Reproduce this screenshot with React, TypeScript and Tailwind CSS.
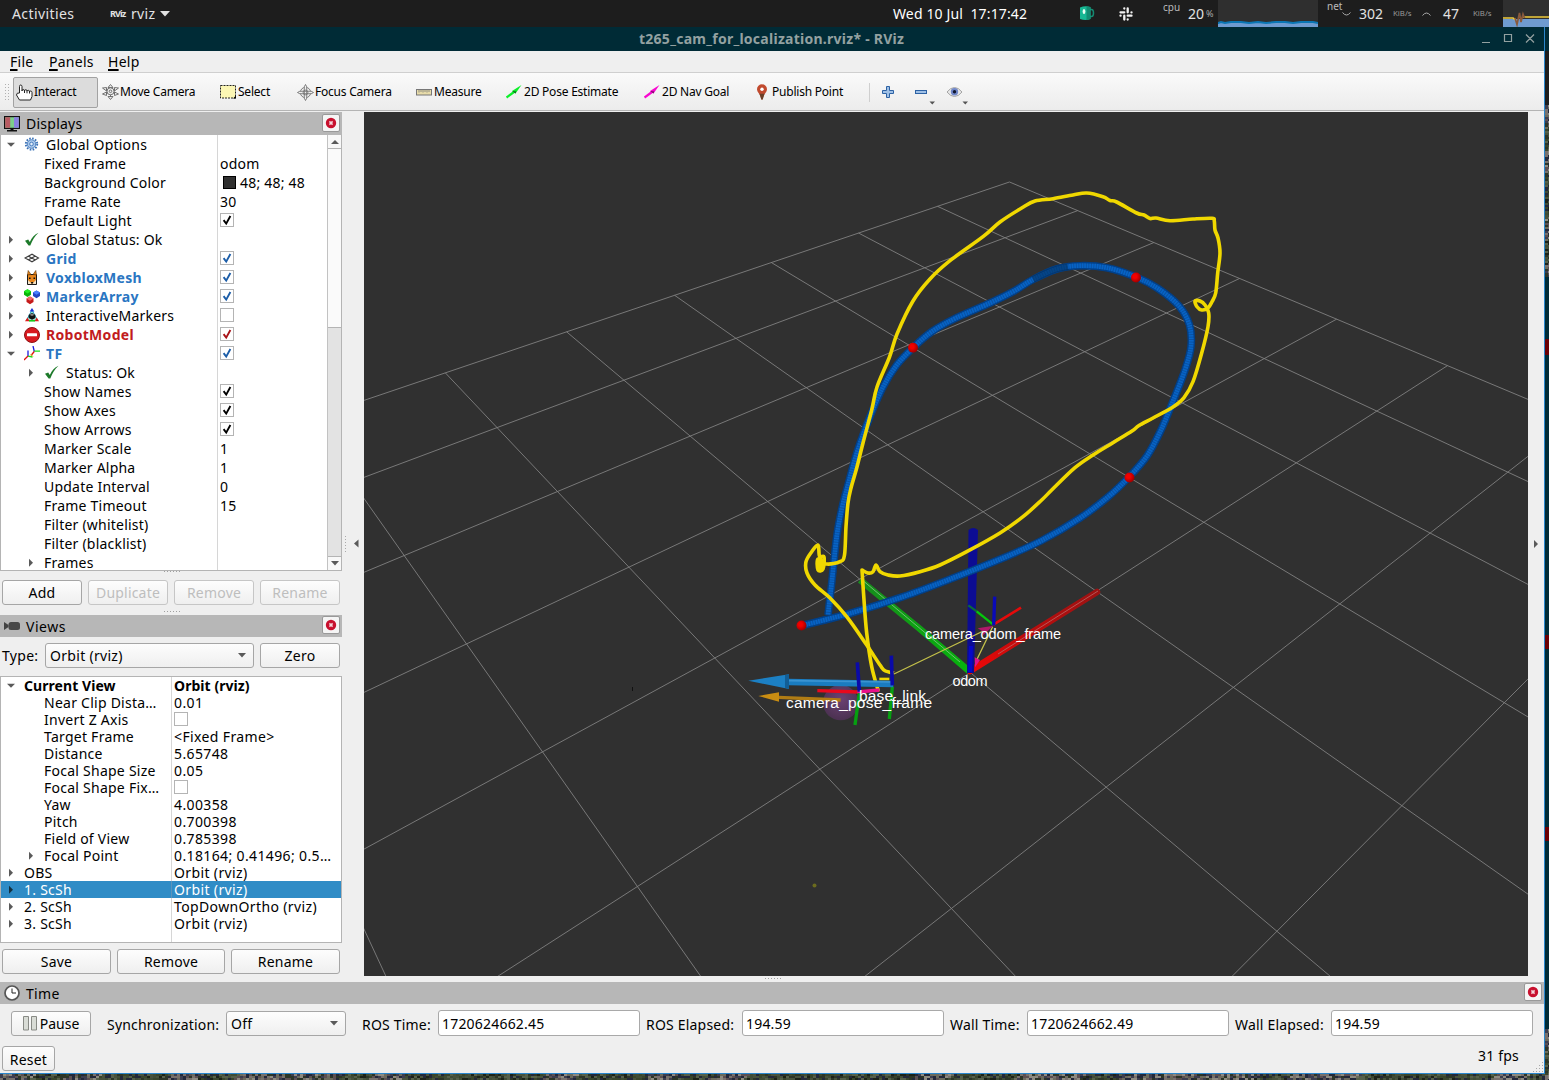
import React from "react";

type Pt = [number, number];

/* ---------- small shared pieces ---------- */

const CloseBtn = ({ small = false }: { small?: boolean }) => (
  <span
    className={
      small
        ? "mb-[2px] flex h-[18px] w-[18px] items-center justify-center rounded-[2px] border border-[#999] bg-[#f5f5f5]"
        : "mb-[2px] flex h-[18px] w-[18px] items-center justify-center rounded-[2px] border border-[#999] bg-[#f5f5f5]"
    }
  >
    <svg width="12" height="12" viewBox="0 0 12 12">
      <circle cx="6" cy="6" r="5.2" fill="#c8102e" />
      <path d="M4.4 4.4l3.2 3.2M7.6 4.4L4.4 7.6" stroke="#f3d5da" strokeWidth="1.5" />
    </svg>
  </span>
);

const Arrow = ({ open, sel }: { open?: boolean; sel?: boolean }) => (
  <svg width="10" height="10" viewBox="0 0 10 10" className="shrink-0">
    <path d={open ? "M1 2.800h8L5 6.800z" : "M3 .800v8l4-4z"} fill={sel ? "#14303f" : "#5a5a5a"} />
  </svg>
);

const Check = ({ color }: { color?: string }) => (
  <svg width="14" height="14" viewBox="0 0 14 14" className="mb-[2px] shrink-0">
    <rect x="0.5" y="0.5" width="13" height="13" fill="#fff" stroke="#b4b4b4" />
    {color && <path d="M3.6 7.2l2.6 3.4 4.2-7.6" fill="none" stroke={color} strokeWidth="1.900" />}
  </svg>
);

const Btn = ({ children, className, disabled }: { children: React.ReactNode; className: string; disabled?: boolean }) => (
  <div
    className={
      "flex items-center justify-center rounded-[3px] border bg-linear-to-b from-[#fdfdfd] to-[#efefef] " +
      (disabled ? "border-[#c6c6c6] text-[#bebebe] " : "border-[#a6a6a6] text-black ") +
      className
    }
  >
    {children}
  </div>
);

const Caret = () => (
  <svg width="8" height="5" viewBox="0 0 8 5">
    <path d="M0 0h8L4 4.4z" fill="#5a5a5a" />
  </svg>
);

const Dots = () => (
  <svg width="18" height="2" viewBox="0 0 18 2" className="ml-[3px]">
    <path d="M0 .500h18" stroke="#a0a0a0" strokeDasharray="1 2" />
  </svg>
);

/* ---------- tree icons ---------- */

const Cube = ({ x, y, a, b }: { x: number; y: number; a: string; b: string }) => (
  <g transform={`translate(${x} ${y})`}>
    <path d="M0 2L3.500 0 7 2v3.500L3.500 7.800 0 5.500z" fill={b} />
    <path d="M0 2L3.500 0 7 2 3.500 4.200z" fill={a} />
  </g>
);

const TreeIcon = ({ name }: { name: string }) => {
  switch (name) {
    case "gear":
      return (
        <svg width="16" height="16" viewBox="0 0 16 16">
          <circle cx="7.500" cy="7" r="5.700" fill="none" stroke="#3a71b5" strokeWidth="1.900" strokeDasharray="1.600 1.380" />
          <circle cx="7.500" cy="7" r="4.300" fill="#a9c7ea" stroke="#4a7fc0" />
          <circle cx="7.500" cy="7" r="1.800" fill="#e8f0fa" stroke="#4a7fc0" />
        </svg>
      );
    case "ok":
      return (
        <svg width="16" height="16" viewBox="0 0 16 16">
          <path d="M1 8.800L4.200 7.500l1.600 2.500C8 5.500 10.500 2.500 14.500.800 10.500 4.500 8.500 8 6.300 13.500H4.600z" fill="#1d7a2a" />
        </svg>
      );
    case "grid":
      return (
        <svg width="16" height="16" viewBox="0 0 16 16">
          <path d="M1 7L8 3.200 14.500 7 8 10.800zM4.500 5.200l6.500 3.600M11 5.200L4.500 8.800" fill="none" stroke="#3c3c3c" strokeWidth="1.100" />
        </svg>
      );
    case "fox":
      return (
        <svg width="16" height="16" viewBox="0 0 16 16">
          <path d="M3.500 4.500h9v10h-9z" fill="#e8861c" stroke="#1a1a1a" />
          <path d="M3.500 5L4.200.500l2.800 4zM12.500 5L11.800.500l-2.800 4z" fill="#e8861c" stroke="#5c3207" strokeWidth=".6" />
          <path d="M4 10l4 4 4-4v4H4z" fill="#f2e3c8" />
          <path d="M5 7.500h1.600v1.500H5zM9.500 7.500h1.600v1.500H9.500zM7.100 12h2v1.600h-2z" fill="#111" />
        </svg>
      );
    case "cubes":
      return (
        <svg width="17" height="16" viewBox="0 0 17 16">
          <Cube x={0} y={0.300} a="#22f022" b="#0ab40a" />
          <Cube x={9} y={1.500} a="#4a80ff" b="#2347c4" />
          <Cube x={2.500} y={7.500} a="#f06a6a" b="#c51a1a" />
        </svg>
      );
    case "im":
      return (
        <svg width="16" height="16" viewBox="0 0 16 16">
          <path d="M8 2L2.300 12.500h11.400z" fill="#9fe6d8" stroke="#20a0c0" />
          <path d="M8 0l2.300 3.500H5.700z" fill="#1530d8" />
          <path d="M1 13.300L3.500 9.500l2 3.800z" fill="#e01818" />
          <path d="M15 13.300L12.700 9.500l-2 3.800z" fill="#e01818" />
          <path d="M5 12.800h6" stroke="#18c818" strokeWidth="1.600" />
          <path d="M4.700 6.700L8 5l3.300 1.700V10L8 11.700 4.700 10z" fill="#111" />
          <path d="M5.300 6.800L8 5.700l2.700 1.100L8 8.100z" fill="#888" />
        </svg>
      );
    case "stop":
      return (
        <svg width="16" height="16" viewBox="0 0 16 16">
          <circle cx="8" cy="8" r="7.500" fill="#d81a1f" stroke="#8e1114" />
          <rect x="3" y="6.300" width="10" height="3" rx=".5" fill="#fff" />
        </svg>
      );
    default:
      return (
        <svg width="16" height="16" viewBox="0 0 16 16">
          <path d="M10.300 5.500L9 0M4 10V4.500" stroke="#1a1ae0" strokeWidth="1.300" />
          <path d="M10.300 5.200H16M4 10.200L8.500 11" stroke="#18e018" strokeWidth="1.300" />
          <path d="M10.300 5.500L7 9.500M4 10l-4 4" stroke="#e01010" strokeWidth="1.300" />
          <path d="M6.500 8L9 10.500" stroke="#d8d020" strokeWidth="1" />
        </svg>
      );
  }
};

/* ---------- displays tree ---------- */

type DRow = {
  t: string;
  open?: boolean;
  arrow?: number;
  icon?: string;
  color?: string;
  val?: string;
  check?: string;
  swatch?: boolean;
};
const blue = "text-[#2a76c2]";
const K = "#000";
const B = "#1c5da8";
const displays: DRow[] = [
  { t: "Global Options", arrow: 0, open: true, icon: "gear" },
  { t: "Fixed Frame", val: "odom" },
  { t: "Background Color", val: "48; 48; 48", swatch: true },
  { t: "Frame Rate", val: "30" },
  { t: "Default Light", check: K },
  { t: "Global Status: Ok", arrow: 0, icon: "ok" },
  { t: "Grid", arrow: 0, icon: "grid", color: blue, check: B },
  { t: "VoxbloxMesh", arrow: 0, icon: "fox", color: blue, check: B },
  { t: "MarkerArray", arrow: 0, icon: "cubes", color: blue, check: B },
  { t: "InteractiveMarkers", arrow: 0, icon: "im", check: "" },
  { t: "RobotModel", arrow: 0, icon: "stop", color: "text-[#c11b20]", check: "#a81318" },
  { t: "TF", arrow: 0, open: true, icon: "tf", color: blue, check: B },
  { t: "Status: Ok", arrow: 1, icon: "ok" },
  { t: "Show Names", check: K },
  { t: "Show Axes", check: K },
  { t: "Show Arrows", check: K },
  { t: "Marker Scale", val: "1" },
  { t: "Marker Alpha", val: "1" },
  { t: "Update Interval", val: "0" },
  { t: "Frame Timeout", val: "15" },
  { t: "Filter (whitelist)" },
  { t: "Filter (blacklist)" },
  { t: "Frames", arrow: 1 },
];

const DisplayRow = ({ r }: { r: DRow }) => (
  <div className="flex h-[19px] shrink-0 items-center leading-[19px] tracking-[0.220px]">
    <div className="flex h-full w-[216px] shrink-0 items-center">
      <span className={"flex shrink-0 items-center " + (r.arrow === 1 ? (r.icon ? "w-[43px] pl-[25px]" : "w-[43px] pl-[25px]") : r.icon ? "w-[23px] pl-[5px]" : "w-[43px]")}>
        {r.arrow !== undefined && <Arrow open={r.open} />}
      </span>
      {r.icon && (
        <span className="w-[22px] shrink-0">
          <TreeIcon name={r.icon} />
        </span>
      )}
      <span className={"whitespace-nowrap " + (r.color ? "font-bold tracking-[0.300px] " + r.color : "")}>{r.t}</span>
    </div>
    <div className="flex h-full grow items-center border-l border-[#d6d6d6] pl-[2px]">
      {r.check !== undefined && <Check color={r.check} />}
      {r.swatch && <span className="mr-1 ml-[3px] h-[13px] w-[13px] border border-black bg-[#303030]" />}
      {r.val}
    </div>
  </div>
);

/* ---------- views tree ---------- */

type VRow = { t: string; arrow?: number; open?: boolean; val?: string; box?: boolean; bold?: boolean; sel?: boolean; top?: boolean };
const views: VRow[] = [
  { t: "Current View", arrow: 0, open: true, val: "Orbit (rviz)", bold: true, top: true },
  { t: "Near Clip Dista…", val: "0.01" },
  { t: "Invert Z Axis", box: true },
  { t: "Target Frame", val: "<Fixed Frame>" },
  { t: "Distance", val: "5.65748" },
  { t: "Focal Shape Size", val: "0.05" },
  { t: "Focal Shape Fix…", box: true },
  { t: "Yaw", val: "4.00358" },
  { t: "Pitch", val: "0.700398" },
  { t: "Field of View", val: "0.785398" },
  { t: "Focal Point", arrow: 1, val: "0.18164; 0.41496; 0.5…" },
  { t: "OBS", arrow: 0, val: "Orbit (rviz)", top: true },
  { t: "1. ScSh", arrow: 0, val: "Orbit (rviz)", top: true, sel: true },
  { t: "2. ScSh", arrow: 0, val: "TopDownOrtho (rviz)", top: true },
  { t: "3. ScSh", arrow: 0, val: "Orbit (rviz)", top: true },
];

const ViewRow = ({ r }: { r: VRow }) => (
  <div
    className={
      "flex h-[17px] shrink-0 items-center leading-[17px] " +
      (r.sel ? "bg-[#308cc6] text-white " : "") +
      (r.bold ? "font-bold tracking-[0.060px]" : "tracking-[0.250px]")
    }
  >
    <div className="flex w-[170px] shrink-0 items-center">
      <span className={"flex shrink-0 items-center " + (r.top ? "w-[23px] pl-[5px]" : "w-[43px] pl-[25px]")}>
        {r.arrow !== undefined && <Arrow open={r.open} sel={r.sel} />}
      </span>
      <span className="whitespace-nowrap">{r.t}</span>
    </div>
    <div
      className={
        "flex h-full grow items-center border-l pl-[2px] whitespace-nowrap " +
        (r.bold ? "" : "tracking-[0.370px] ") +
        (r.sel ? "border-[#5b93bb]" : "border-[#d6d6d6]")
      }
    >
      {r.box && <Check />}
      {r.val}
    </div>
  </div>
);

/* ---------- 3D scene ---------- */

const smooth = (p: Pt[]) => {
  let d = `M${p[0][0]} ${p[0][1]}`;
  for (let i = 0; i < p.length - 1; i++) {
    const a = p[i - 1] ?? p[i];
    const b = p[i];
    const c = p[i + 1];
    const e = p[i + 2] ?? c;
    d += `C${b[0] + (c[0] - a[0]) / 6} ${b[1] + (c[1] - a[1]) / 6} ${c[0] - (e[0] - b[0]) / 6} ${c[1] - (e[1] - b[1]) / 6} ${c[0]} ${c[1]}`;
  }
  return d;
};

/* Orbit camera: ground-plane point to viewport pixel. */
const project = (x: number, y: number): Pt => {
  const right = 0.1322 + 0.7592 * x - 0.6509 * y;
  const up = -0.6998 + 0.4194 * x + 0.4892 * y;
  const depth = 5.681 + 0.4978 * x + 0.5806 * y;
  return [946 + (1043 * right) / depth, 544 - (1043 * up) / depth];
};

const gridLines: string[] = [];
for (let i = -5; i <= 5; i++) {
  const [a, b] = [project(i, -5), project(i, 5)];
  const [c, e] = [project(-5, i), project(5, i)];
  gridLines.push(`M${a[0]} ${a[1]}L${b[0]} ${b[1]}`, `M${c[0]} ${c[1]}L${e[0]} ${e[1]}`);
}

const path: Pt[] = [
  [828, 615], [831.7, 583], [836.7, 536.7], [842, 508], [848.5, 483], [857.500, 451], [870, 416.7], [883, 387], [896.7, 365],
  [913, 347.7], [932, 331.5], [956.7, 317.7], [990, 303], [1013, 291.7], [1033, 279.500], [1056.7, 269], [1080, 265.7], [1106.7, 267.7],
  [1136, 277], [1158, 288.500], [1179, 306], [1189.500, 325], [1191, 346.7], [1185, 370], [1173.500, 400], [1161, 430], [1147, 456],
  [1129, 477], [1108, 497], [1080, 518], [1041.7, 540.500], [1003, 558], [953, 578], [903, 596.7], [853, 612.500], [801.7, 625.7],
];
const dark: Pt[] = [[1033, 279.500], [1044, 274], [1056.7, 269], [1068, 267]];

const odomA: Pt[] = [
  [894, 673], [885, 670.7], [880, 665], [866.7, 645], [846.7, 616.7], [830, 598], [815, 585], [807, 573], [806, 561.7],
  [811.7, 551.700], [818, 545], [819.5, 556], [824, 557], [823, 569], [818, 570], [818, 559], [826.7, 564], [840, 561.7], [844.500, 555], [846, 526.7], [848, 503],
  [851, 488], [856.7, 468], [863, 443], [871.7, 410], [877, 387], [889.500, 357], [897, 334], [913, 301], [930, 279],
  [950, 260.7], [983, 236.7], [1000, 222], [1021.7, 208], [1035, 201], [1053, 198.7], [1073, 195], [1086.7, 193], [1103, 196.7],
  [1110, 200.500], [1116.7, 202], [1136.7, 213], [1144, 215], [1150, 218.500], [1156, 218], [1170, 220.7], [1193, 219], [1212, 218.3], [1214.3, 221], [1215, 230], [1218, 238],
  [1220, 253], [1217.7, 273], [1215.7, 293], [1212, 301.7], [1208, 308], [1201.7, 310], [1197, 306.7], [1195, 301], [1200, 301],
  [1205, 305], [1208.7, 313], [1208, 326.7], [1201.7, 353], [1193, 381.7], [1184, 397.7], [1173, 407], [1153, 418], [1139, 425.500],
  [1132, 431], [1113, 442.7], [1093, 455], [1075, 467.7], [1051.7, 490], [1041.7, 500], [1023, 516.7], [1000, 533], [966.7, 551.7],
  [940, 565], [920, 571.7], [900, 576], [888, 575], [880, 571.7], [876, 565], [873, 571.7], [868, 573], [862, 570],
];
const odomB: Pt[] = [[862, 570], [864, 600], [866.7, 633], [871.7, 666.7], [878, 690]];

const Scene = () => (
  <svg width="1164" height="864" viewBox="364 112 1164 864" className="block bg-[#303030]">
    <defs>
      <linearGradient id="red" x1="0" y1="1" x2="1" y2="0">
        <stop offset="0" stopColor="#ee0808" />
        <stop offset="0.5" stopColor="#b80d0d" />
        <stop offset="1" stopColor="#9c1212" />
      </linearGradient>
      <linearGradient id="green" x1="0" y1="0" x2="1" y2="1">
        <stop offset="0" stopColor="#178c1c" />
        <stop offset="1" stopColor="#06b40c" />
      </linearGradient>
      <radialGradient id="ball" cx="40%" cy="40%" r="60%">
        <stop offset="0.3" stopColor="#f20000" />
        <stop offset="1" stopColor="#a00000" />
      </radialGradient>
      <radialGradient id="purple" cx="50%" cy="40%" r="60%">
        <stop offset="0" stopColor="#6b4273" />
        <stop offset="1" stopColor="#4b3151" />
      </radialGradient>
    </defs>
    <path d={gridLines.join("")} stroke="#808080" strokeWidth="0.9" fill="none" />
    <circle cx="814.500" cy="885.500" r="2" fill="#6b6b1e" />
    <path d="M632.500 687v4" stroke="#111" />

    <path d="M1097 592L970 671" stroke="url(#red)" strokeWidth="6.500" strokeLinecap="round" />
    <path d="M1098 591L998 654" stroke="#b86a6a" strokeWidth="0.800" />
    <path d="M860 580L920 629L969 671" fill="none" stroke="url(#green)" strokeWidth="6.500" />
    <path d="M861 579L960 662" stroke="#7cc07e" strokeWidth="0.900" />
    <path d="M968.500 530q4.700-4 9.500 0l-4 143h-7z" fill="#0c0c93" />
    <path d="M971 646l-1 26" stroke="#0808c8" strokeWidth="4" />

    <path d={smooth(path)} fill="none" stroke="#01408a" strokeWidth="7.600" />
    <path d={smooth(path)} fill="none" stroke="#0763c6" strokeWidth="4.800" />
    <path d={smooth(path)} fill="none" stroke="#0a4080" strokeWidth="7.500" strokeDasharray="0.900 1.600" opacity="0.500" />
    <path d={smooth(dark)} fill="none" stroke="#04315f" strokeWidth="6.500" opacity="0.600" />
    {[[801.500, 625.500], [913, 347.700], [1136, 277.500], [1129.500, 477.500]].map(([x, y]) => (
      <circle key={x} cx={x} cy={y} r="5" fill="url(#ball)" />
    ))}

    <g transform="translate(720 500) scale(0.33333)">
      <circle cx="362" cy="608" r="53" fill="url(#purple)" />
      <path d="M522 522L790 393M818 380L770 480" stroke="#c3c04a" strokeWidth="4" />
      <path d="M773 385l47-8-34 32 4-14z" fill="#b0186a" />
      <path d="M764 472l16 8-15 22z" fill="#e0128a" />
      <path d="M745 316L770 334" stroke="#0c6a3a" strokeWidth="7" />
      <path d="M770 334L820 374" stroke="#05c80c" strokeWidth="7" />
      <path d="M820 374L903 323" stroke="#e60a0a" strokeWidth="8" />
      <path d="M824 290L821 376" stroke="#0a0ab8" strokeWidth="10" />
    </g>

    <path d={smooth(odomA)} fill="none" stroke="#f0d800" strokeWidth="3.600" strokeLinejoin="round" />
    <path d={smooth(odomB)} fill="none" stroke="#f0d800" strokeWidth="3.600" strokeLinecap="round" />
    <ellipse cx="820.500" cy="564" rx="4" ry="6.500" fill="#f0d800" />

    <g transform="translate(720 500) scale(0.33333)">
      <path d="M478 537h30" stroke="#f0d800" strokeWidth="8" />
      <path d="M292 572L415 576" stroke="#e8081c" strokeWidth="10" />
      <path d="M412 576L478 570" stroke="#e8108a" strokeWidth="10" />
      <path d="M418 580L405 675" stroke="#06a010" strokeWidth="10" />
      <path d="M517 560L508 657" stroke="#06a010" strokeWidth="10" />
      <path d="M205 546L520 552" stroke="#1a7cc0" strokeWidth="20" />
      <path d="M205 542L515 546" stroke="#3a94d2" strokeWidth="5" />
      <path d="M85 542L207 523V567z" fill="#1c80c4" />
      <path d="M195 525l12-2v44l-12-4z" fill="#125e96" />
      <path d="M175 592L362 600" stroke="#b07c14" strokeWidth="10" />
      <path d="M115 588L177 577V605z" fill="#c98d12" />
      <path d="M412 487L418 575" stroke="#0a0aa8" strokeWidth="11" />
      <path d="M514 467L517 556" stroke="#0a0aa8" strokeWidth="11" />
    </g>

    <g fill="#fff" className="font-['Liberation_Sans',sans-serif]">
      <text x="925" y="639" fontSize="14.500" textLength="136">camera_odom_frame</text>
      <text x="952.500" y="686" fontSize="14.500" textLength="35">odom</text>
      <text x="859" y="701" fontSize="15.500" textLength="67">base_link</text>
      <text x="786" y="707.500" fontSize="15.500" textLength="146">camera_pose_frame</text>
    </g>
  </svg>
);

/* ---------- aerial photo behind the windows ---------- */

const greens = ["#2c3527", "#47523c", "#55604a", "#23283a", "#38452b", "#1c2218", "#3f4c36"];
const roofs = ["#6b6a5c", "#8d8a80", "#5b4f52", "#3c3d4f", "#23283a", "#77706c", "#2c3527"];
const hash = (n: number) => {
  let v = Math.imul(n ^ (n >>> 15), 2246822519);
  v = Math.imul(v ^ (v >>> 13), 3266489917);
  return (v ^ (v >>> 16)) >>> 0;
};
const Aerial = ({ w, h }: { w: number; h: number }) => {
  const cells: React.ReactNode[] = [];
  for (let y = 0; y < h; y += 2)
    for (let x = 0; x < w; x += 3) {
      const block = hash(Math.floor((x + y * 1.5) / 34) + 91) % 5 < 2 ? roofs : greens;
      cells.push(<rect key={`${x}-${y}`} x={x} y={y} width="3" height="2" fill={block[hash(x * 977 + y * 131 + 5) % 7]} />);
    }
  return (
    <svg width={w} height={h} className="block shrink-0">
      {cells}
    </svg>
  );
};

/* ---------- toolbar ---------- */

const Tool = ({ w, icon, label }: { w: string; icon: React.ReactNode; label: string }) => (
  <div className={"flex shrink-0 items-center gap-[2px] whitespace-nowrap " + w}>
    <span className="flex w-4 shrink-0 justify-center">{icon}</span>
    {label}
  </div>
);

const PoseArrow = ({ c, d }: { c: string; d: string }) => (
  <svg width="16" height="16" viewBox="0 0 16 16">
    <path d="M.5 13.500L8 8" stroke={c} strokeWidth="2.200" />
    <path d="M6 7L15.500 1 9.500 9.500z" fill={c} />
    <path d="M6 7l3.500 2.500.8-2z" fill={d} />
  </svg>
);

const Crosshair = () => (
  <svg width="17" height="17" viewBox="0 0 18 18" className="shrink-0">
    <g fill="#eee" stroke="#777" strokeWidth="1">
      <circle cx="9" cy="9" r="5.500" />
      <path d="M9 .5l1.300 2.500v12L9 17.500 7.700 15V3zM.5 9L3 7.700h12L17.500 9 15 10.300H3z" />
      <circle cx="9" cy="9" r="2.500" fill="none" />
    </g>
  </svg>
);

const MoveIcon = () => (
  <svg width="17" height="16" viewBox="0 0 17 16" className="shrink-0">
    <g fill="#eee" stroke="#666" strokeWidth="0.900">
      <path d="M8.500.5l2.500 3H6zM8.500 15.500l2.500-3H6zM.5 4l4-.5v3.500zM16.500 4l-4-.5v3.500zM.5 10l4 1.500V8zM16.500 10l-4 1.500V8z" />
      <path d="M4 5l9 4.500M13 5L4 9.500M8.500 3v10" />
      <circle cx="8.500" cy="7.300" r="3.500" />
      <circle cx="8.500" cy="7.300" r="1.300" />
    </g>
  </svg>
);

const Field = ({ label, lw, value }: { label: string; lw: string; value: string }) => (
  <>
    <span className={"shrink-0 whitespace-nowrap pt-[2px] " + lw}>{label}</span>
    <div className="mr-[6px] flex h-[26px] w-[202px] shrink-0 items-center rounded-[3px] border border-[#a9a9a9] bg-white pl-[3px]">{value}</div>
  </>
);

const cpuTop = "M0 24V23l3-1 4 1 6-1h10l8 1 9-1 8 1 10-1h9l8 1 8-1h12l5 1";

export default function App() {
  return (
    <div className="flex h-[1080px] w-[1549px] flex-col overflow-hidden bg-[#efefef] font-['Noto_Sans',sans-serif] text-[14px] text-black">
      {/* desktop top bar */}
      <div className="flex h-[27px] shrink-0 items-center bg-[#1d1d1d] text-[#e2e2e2]">
        <span className="w-[97px] pl-3 tracking-[0.400px]">Activities</span>
        <span className="w-[34px] pl-[13px] text-[9px] leading-none font-bold tracking-[-0.9px]">RViz</span>
        <span className="w-[29px] tracking-[0.300px]">rviz</span>
        <svg width="10" height="6" viewBox="0 0 10 6">
          <path d="M0 0h10L5 5.500z" fill="#e2e2e2" />
        </svg>
        <span className="ml-[723px] w-[186px] tracking-[0.130px] whitespace-pre text-white">Wed 10 Jul  17:17:42</span>
        <svg width="16" height="15" viewBox="0 0 16 15">
          <path d="M10 3.500h2.500q2 0 2 3.500t-2 3.500H10" fill="none" stroke="#158a72" strokeWidth="1.500" />
          <path d="M1 1.500q5-2 10.500-.5V13q-5 2-10.500 0z" fill="#17b894" />
          <path d="M7.500.5q2 0 4 .7V13l-4 1z" fill="#128c72" />
          <ellipse cx="5" cy="5.500" rx="1.400" ry="2.500" fill="#eafff4" />
        </svg>
        <svg width="14" height="14" viewBox="0 0 14 14" className="ml-[24px]">
          <g stroke="#f2f2f2" strokeWidth="2.300" strokeLinecap="round">
            <path d="M5.300 5.300H1.500M5.300 1.500v.100M8.700 5.300V1.500M12.500 5.300v.100M8.700 8.700h3.800M8.700 12.500v-.100M5.300 8.700v3.800M1.500 8.700h.100" />
          </g>
        </svg>
        <span className="mb-[14px] ml-[30px] w-[25px] text-[10px] leading-none text-[#bbb]">cpu</span>
        <span className="text-[14px]">20</span>
        <span className="ml-[2px] w-[12px] text-[9px] text-[#aaa]">%</span>
        <svg width="100" height="27" className="ml-auto shrink-0 bg-[#2f2f2f]">
          <path d={cpuTop + "V27H0z"} fill="#6f9bd0" />
          <path d={cpuTop} fill="none" stroke="#0a76b4" strokeWidth="2" />
        </svg>
        <div className="flex h-full w-[185px] shrink-0 items-center">
          <span className="mb-[15px] ml-[9px] w-[15px] text-[10px] leading-none text-[#bbb]">net</span>
          <svg width="9" height="4" viewBox="0 0 9 4">
            <path d="M.5.5q2 2.500 4 2.500t4-2.500" fill="none" stroke="#aaa" />
          </svg>
          <span className="ml-[8px] w-[34px]">302</span>
          <span className="w-[29px] text-[7.800px] text-[#999]">KiB/s</span>
          <svg width="9" height="4" viewBox="0 0 9 4">
            <path d="M.5 3.500q2-2.500 4-2.500t4 2.500" fill="none" stroke="#aaa" />
          </svg>
          <span className="ml-[12px] w-[30px]">47</span>
          <span className="text-[7.800px] text-[#999]">KiB/s</span>
        </div>
        <svg width="46" height="27" className="shrink-0 bg-[#2f2f2f]">
          <path d="M0 19h46v8H0z" fill="#6f9bd0" />
          <path d="M0 18h10l3 2M20 17h26" fill="none" stroke="#f0cc3c" strokeWidth="1.600" />
          <path d="M12 18l2 6.500L16.500 13l1.500 9 2-8 1.500 4" fill="none" stroke="#8a5a3c" strokeWidth="1.700" />
        </svg>
      </div>

      <div className="flex h-[1053px] shrink-0">
        <div className="flex w-[1545px] shrink-0 flex-col">
          <div className="flex h-[1047px] shrink-0 flex-col border-r border-b border-[#2a86cc]">
            {/* title bar */}
            <div className="flex h-6 shrink-0 items-center bg-[#002b36] pb-[2px] text-[14px] font-bold text-[#93a1a1]">
              <span className="ml-[639px] w-[843px] tracking-[0.260px] whitespace-nowrap">t265_cam_for_localization.rviz* - RViz</span>
              <svg width="54" height="10" viewBox="0 0 54 10" fill="none" stroke="#93a1a1">
                <path d="M0 9.500h8M22.500 1.500h7v7h-7zM44 1.500l8 8M52 1.500l-8 8" strokeWidth="1.200" />
              </svg>
            </div>
            {/* menu */}
            <div className="flex h-[22px] shrink-0 items-center border-b border-[#cfcfcf] pl-[10px] tracking-[0.250px]">
              {["File", "Panels", "Help"].map((m, i) => (
                <span key={m} className={i === 0 ? "w-[39px]" : "w-[59px]"}>
                  <span className="underline decoration-[1.500px] underline-offset-[2px]">{m[0]}</span>
                  {m.slice(1)}
                </span>
              ))}
            </div>
            {/* toolbar */}
            <div className="flex h-[38px] shrink-0 items-center border-b border-[#b4b4b4] bg-linear-to-b from-[#fafafa] to-[#ececec] pt-px text-[12px] tracking-[-0.220px]">
              <svg width="13" height="18" viewBox="0 0 13 18">
                <path d="M5.500 1v16M8.500 1v16" stroke="#b0b0b0" strokeDasharray="1 2" />
              </svg>
              <div className="mr-[4px] flex h-[31px] w-[85px] shrink-0 items-center rounded-[2px] border border-[#a2a2a2] bg-[#dcdcdc] pl-[2px]">
                <svg width="17" height="17" viewBox="0 0 17 17" className="mr-px shrink-0">
                  <path
                    d="M3.500 9V2.500q0-1.500 1.200-1.500T6 2.500V7q0-1.500 1.200-1.500T8.500 7q0-1.300 1.300-1.300T11 7.300q0-1 1.300-1T13.500 8q0-1 1.200-1T16 8.500v4l-1.500 3.500H3.500L.5 11q0-2.500 3-2z"
                    fill="#fff"
                    stroke="#222"
                  />
                  <path d="M8.500 7v2M11 7.300v2M13.500 8v1.500" stroke="#222" />
                </svg>
                Interact
              </div>
              <Tool w="w-[118px]" icon={<MoveIcon />} label="Move Camera" />
              <Tool
                w="w-[77px]"
                label="Select"
                icon={
                  <svg width="16" height="14" viewBox="0 0 16 14">
                    <rect x="0.500" y="0.500" width="15" height="12.500" fill="#fbf6b4" stroke="#222" strokeDasharray="2 1" />
                    <path d="M13 13.500h3v-3z" fill="#000" />
                  </svg>
                }
              />
              <Tool w="w-[119px]" icon={<Crosshair />} label="Focus Camera" />
              <Tool
                w="w-[90px]"
                label="Measure"
                icon={
                  <svg width="16" height="7" viewBox="0 0 16 7">
                    <rect x="0.500" y="0.500" width="15" height="5.500" fill="#e8dcaa" stroke="#777" />
                    <path d="M3 1v2.500M5 1v2M7 1v2.500M9 1v2M11 1v2.500M13 1v2" stroke="#777" strokeWidth=".8" />
                  </svg>
                }
              />
              <Tool w="w-[138px]" icon={<PoseArrow c="#0cf02a" d="#0a6a18" />} label="2D Pose Estimate" />
              <Tool w="w-[110px]" icon={<PoseArrow c="#f808d0" d="#7a0a68" />} label="2D Nav Goal" />
              <Tool
                w="w-[115px]"
                label="Publish Point"
                icon={
                  <svg width="12" height="16" viewBox="0 0 12 16">
                    <path d="M6 .3a5 5 0 0 1 5 5c0 3-3.800 5.200-4.300 10.200H5.300C4.800 10.500 1 8.300 1 5.300a5 5 0 0 1 5-5z" fill="#c14a2e" />
                    <path d="M3.500 9.800h5L6.700 15.500H5.300z" fill="#6a4028" />
                    <circle cx="6" cy="5.200" r="1.700" fill="#fff" />
                  </svg>
                }
              />
              <span className="h-[19px] w-px bg-[#cfcfcf]" />
              <svg width="100" height="25" viewBox="0 0 100 25" className="ml-[9px]">
                <path d="M7.500 6.500h3v4h4v3h-4v4h-3v-4h-4v-3h4z" fill="#9fc0e6" stroke="#2d62a4" />
                <rect x="36.500" y="10.500" width="11" height="3" fill="#9fc0e6" stroke="#2d62a4" />
                <path d="M50.500 21.500h5.500l-2.700 3zM83.500 21.500h5.500l-2.700 3z" fill="#555" />
                <path d="M68 12q3.500-4.500 7.500-4.500T83 12q-3.500 4.500-7.500 4.500T68 12z" fill="#e8e8e8" stroke="#a4a4a4" />
                <circle cx="75.500" cy="11.700" r="3.700" fill="#6f86c8" />
                <circle cx="75.500" cy="11.700" r="1.700" fill="#10152c" />
              </svg>
            </div>

            {/* middle */}
            <div className="mt-px flex h-[864px] shrink-0">
              <div className="flex w-[342px] shrink-0 flex-col">
                <div className="flex h-[23px] shrink-0 items-center bg-[#b7b7b7] pr-[2px] pl-1">
                  <svg width="16" height="16" viewBox="0 0 16 16">
                    <rect x=".6" y=".6" width="14.800" height="11.800" fill="#7ccf8a" stroke="#111" strokeWidth="1.200" />
                    <path d="M1.200 1.200h5v10.600h-5z" fill="#b95a62" />
                    <path d="M10 1.200h4.800v10.600H10z" fill="#8a80e0" />
                    <path d="M6.500 13h3v1H13v1.500H3V14h3.500z" fill="#111" />
                  </svg>
                  <span className="ml-[6px] grow tracking-[0.250px]">Displays</span>
                  <CloseBtn />
                </div>
                <div className="flex h-[436px] shrink-0 border-x border-b border-[#b4b4b4] bg-white">
                  <div className="flex h-full grow flex-col overflow-hidden">
                    {displays.map((r) => (
                      <DisplayRow key={r.t} r={r} />
                    ))}
                  </div>
                  <div className="flex w-[14px] shrink-0 flex-col border-l border-[#c2c2c2] bg-[#e3e3e3]">
                    <div className="flex h-[14px] items-center justify-center border-b border-[#b4b4b4] bg-[#f8f8f8]">
                      <svg width="8" height="4" viewBox="0 0 8 4">
                        <path d="M0 4h8L4 0z" fill="#5a5a5a" />
                      </svg>
                    </div>
                    <div className="h-[179px] border-b border-[#b4b4b4] bg-[#fafafa]" />
                    <div className="mt-auto flex h-[14px] items-center justify-center border-t border-[#b4b4b4] bg-[#f8f8f8]">
                      <Caret />
                    </div>
                  </div>
                </div>
                <div className="flex h-[9px] shrink-0 justify-center">
                  <Dots />
                </div>
                <div className="flex shrink-0 gap-[6px] pl-[2px] tracking-[0.200px]">
                  <Btn className="h-[25px] w-[80px]">Add</Btn>
                  <Btn className="h-[25px] w-[80px]" disabled>Duplicate</Btn>
                  <Btn className="h-[25px] w-[80px]" disabled>Remove</Btn>
                  <Btn className="h-[25px] w-[80px]" disabled>Rename</Btn>
                </div>
                <div className="flex h-[10px] shrink-0 items-center justify-center pt-[3px]">
                  <Dots />
                </div>
                <div className="flex h-[22px] shrink-0 items-center bg-[#b7b7b7] pr-[2px] pl-1">
                  <svg width="16" height="10" viewBox="0 0 16 10">
                    <path d="M0 1l4.500 3v2L0 9z" fill="#444" />
                    <rect x="4.500" y="1" width="11.500" height="8" rx="2.500" fill="#484848" />
                  </svg>
                  <span className="ml-[6px] grow tracking-[0.500px]">Views</span>
                  <CloseBtn />
                </div>
                <div className="mt-[6px] flex shrink-0 items-center pl-[2px] tracking-[0.300px]">
                  <span className="w-[43px]">Type:</span>
                  <div className="mr-[6px] flex h-[25px] w-[209px] items-center justify-between rounded-[3px] border border-[#a6a6a6] bg-linear-to-b from-[#fdfdfd] to-[#efefef] pr-[7px] pl-1">
                    Orbit (rviz) <Caret />
                  </div>
                  <Btn className="h-[25px] w-[80px]">Zero</Btn>
                </div>
                <div className="mt-[8px] flex h-[267px] shrink-0 flex-col border border-[#b4b4b4] bg-white">
                  {views.map((r) => (
                    <ViewRow key={r.t} r={r} />
                  ))}
                  <div className="flex grow pl-[170px]">
                    <span className="border-l border-[#d6d6d6]" />
                  </div>
                </div>
                <div className="mt-[6px] flex shrink-0 gap-[6px] pl-[2px] tracking-[0.200px]">
                  <Btn className="h-[25px] w-[109px]">Save</Btn>
                  <Btn className="h-[25px] w-[108px]">Remove</Btn>
                  <Btn className="h-[25px] w-[109px]">Rename</Btn>
                </div>
              </div>
              <div className="flex w-[22px] shrink-0 items-center">
                <svg width="22" height="18" viewBox="0 0 22 18">
                  <path d="M3.500 1v16" stroke="#aaa" strokeDasharray="1 2" />
                  <path d="M16.500 4.500v8l-4.500-4z" fill="#5a5a5a" />
                </svg>
              </div>
              <Scene />
              <div className="flex w-4 shrink-0 items-center pl-[5px]">
                <svg width="6" height="10" viewBox="0 0 6 10">
                  <path d="M1 1v8l4-4z" fill="#5a5a5a" />
                </svg>
              </div>
            </div>

            {/* time dock */}
            <div className="flex h-[6px] shrink-0 justify-center pt-[2px]">
              <Dots />
            </div>
            <div className="flex h-[22px] shrink-0 items-center bg-[#b7b7b7] pr-[2px] pl-1">
              <svg width="16" height="16" viewBox="0 0 16 16">
                <circle cx="8" cy="8" r="7" fill="#fff" stroke="#555" strokeWidth="1.700" />
                <path d="M8 3.500V8h4" fill="none" stroke="#222" />
              </svg>
              <span className="ml-[6px] grow tracking-[0.300px]">Time</span>
              <CloseBtn small />
            </div>
            <div className="mt-[6px] flex h-[26px] shrink-0 items-center pl-[11px] tracking-[0.200px]">
              <Btn className="mr-4 h-[25px] w-[80px] gap-[2px] tracking-normal">
                <svg width="15" height="15" viewBox="0 0 15 15">
                  <path d="M.5.5h5v13.500h-5zM8.500.5h5v13.500h-5z" fill="#d9dcd6" stroke="#888a85" />
                </svg>
                Pause
              </Btn>
              <span className="w-[119px] pt-[2px] whitespace-nowrap">Synchronization:</span>
              <div className="mr-4 flex h-[25px] w-[120px] shrink-0 items-center justify-between rounded-[3px] border border-[#a6a6a6] bg-linear-to-b from-[#fdfdfd] to-[#efefef] pr-[7px] pl-1">
                Off <Caret />
              </div>
              <Field label="ROS Time:" lw="w-[76px]" value="1720624662.45" />
              <Field label="ROS Elapsed:" lw="w-[96px]" value="194.59" />
              <Field label="Wall Time:" lw="w-[77px]" value="1720624662.49" />
              <Field label="Wall Elapsed:" lw="w-[96px]" value="194.59" />
            </div>
            <div className="mt-[10px] flex grow items-start justify-between pl-[2px]">
              <Btn className="h-[25px] w-[53px] pt-px tracking-[0.200px]">Reset</Btn>
              <div className="flex h-full">
                <span className="w-[54px] leading-[19px] tracking-[0.200px]">31 fps</span>
                <svg width="12" height="12" viewBox="0 0 12 12" className="mt-auto">
                  <path d="M1 10.500h11M4 7.500h8M7 4.500h5M10 1.500h2" stroke="#a8a8a8" strokeDasharray="1 2" />
                </svg>
              </div>
            </div>
          </div>
          <Aerial w={1545} h={6} />
        </div>
        {/* neighbouring windows at the screen edge */}
        <div className="flex w-1 shrink-0 flex-col">
          <div className="h-6 shrink-0 bg-[#002b36]" />
          <div className="h-[54px] shrink-0 bg-[#1d1d1d]" />
          <Aerial w={4} h={172} />
          <div className="h-[62px] shrink-0 bg-[#002b36]" />
          <div className="h-[16px] shrink-0 bg-[#6b0005]" />
          <div className="h-[280px] shrink-0 bg-[#002b36]" />
          <div className="h-[14px] shrink-0 bg-[#6b0005]" />
          <div className="h-[178px] shrink-0 bg-[#002b36]" />
          <div className="h-[14px] shrink-0 bg-[#6b0005]" />
          <div className="h-[188px] shrink-0 bg-[#002b36]" />
          <Aerial w={4} h={51} />
        </div>
      </div>
    </div>
  );
}
